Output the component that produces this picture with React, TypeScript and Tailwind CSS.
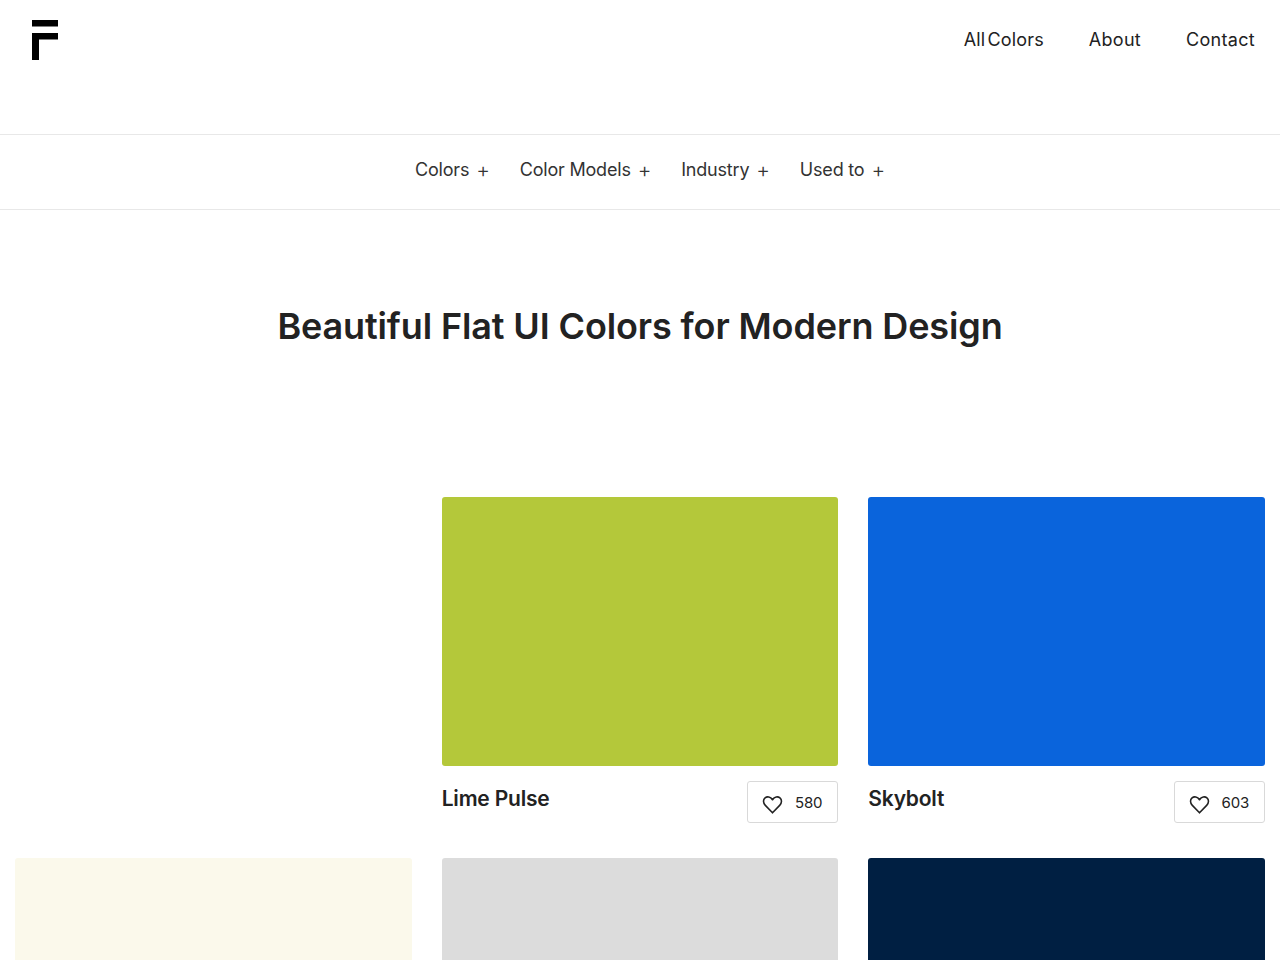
const FONT = "font-['Inter','Noto_Sans',sans-serif]";

const NAV_LINKS = ["All Colors", "About", "Contact"];
const FILTERS = ["Colors", "Color Models", "Industry", "Used to"];

type Swatch = { name?: string; color?: string; likes?: number };

const SWATCHES: Swatch[] = [
  {},
  { name: "Lime Pulse", color: "bg-[#b4c83a]", likes: 580 },
  { name: "Skybolt", color: "bg-[#0a64dc]", likes: 603 },
  { color: "bg-[#fbf9eb]" },
  { color: "bg-[#dcdcdc]" },
  { color: "bg-[#001f42]" },
];

function Logo() {
  return (
    <svg width="26" height="40" viewBox="0 0 26 40" aria-label="Logo">
      <path d="M0 0h26v6.500H0zM0 13h26v6.500H7V40H0z" fill="#000" />
    </svg>
  );
}

function HeartIcon() {
  return (
    <svg viewBox="0 0 24 24" className="mt-[3px] h-[21px] w-[21px]" fill="none" stroke="#222" strokeWidth="1.8" strokeLinejoin="round">
      <path d="M12 21.500 3.800 13C1 10.100 1.200 6.300 3.500 4.400 5.800 2.500 9.700 2.800 12 6.600 14.300 2.800 18.200 2.500 20.500 4.400 22.800 6.300 23 10.100 20.200 13Z" />
    </svg>
  );
}

function SwatchCard({ swatch }: { swatch: Swatch }) {
  if (!swatch.color) return <div />;
  return (
    <div className="h-[326px]">
      <div className={`h-[269px] rounded-[3px] ${swatch.color}`} />
      {swatch.name && (
        <div className="mt-[15px] flex items-start justify-between">
          <h3 className="mt-[3px] text-[21px] leading-[30px] font-semibold tracking-[-0.2px] text-[#222]">
            {swatch.name}
          </h3>
          <button className="flex h-[42px] items-center gap-[12px] rounded-[3px] border border-[#d9d9d9] pt-[2px] pr-[15px] pl-[14px] text-[15px] tracking-[-0.2px] text-[#222]">
            <HeartIcon />
            {swatch.likes}
          </button>
        </div>
      )}
    </div>
  );
}

export default function App() {
  return (
    <div className={`h-[960px] overflow-hidden bg-white ${FONT}`}>
      <header className="flex h-[135px] items-start justify-between border-b border-[#e8e8e8] pt-[20px] pr-[25px] pl-[32px]">
        <Logo />
        <nav className="flex gap-[45px] pt-[6px] text-[18px] leading-[27px] tracking-[0.3px] [word-spacing:-3px] text-[#222]">
          {NAV_LINKS.map((link) => (
            <a key={link} href="#" className="last:ml-0 first:tracking-[0.15px]">
              {link}
            </a>
          ))}
        </nav>
      </header>

      <div className="flex h-[75px] items-center justify-center gap-[30px] border-b border-[#e8e8e8] pb-[6px] pl-[20px] text-[18px] tracking-[-0.2px] text-[#333]">
        {FILTERS.map((filter) => (
          <button key={filter} className="flex items-center gap-[7px]">
            {filter}
            <span className="mt-[1px] text-[21px] leading-none font-light">+</span>
          </button>
        ))}
      </div>

      <h1 className="mt-[90px] text-center text-[36px] leading-[52px] font-semibold tracking-[-0.12px] text-[#222]">
        Beautiful Flat UI Colors for Modern Design
      </h1>

      <div className="mt-[145px] grid grid-cols-3 gap-x-[30px] gap-y-[35px] px-[15px]">
        {SWATCHES.map((swatch, i) => (
          <SwatchCard key={i} swatch={swatch} />
        ))}
      </div>
    </div>
  );
}
